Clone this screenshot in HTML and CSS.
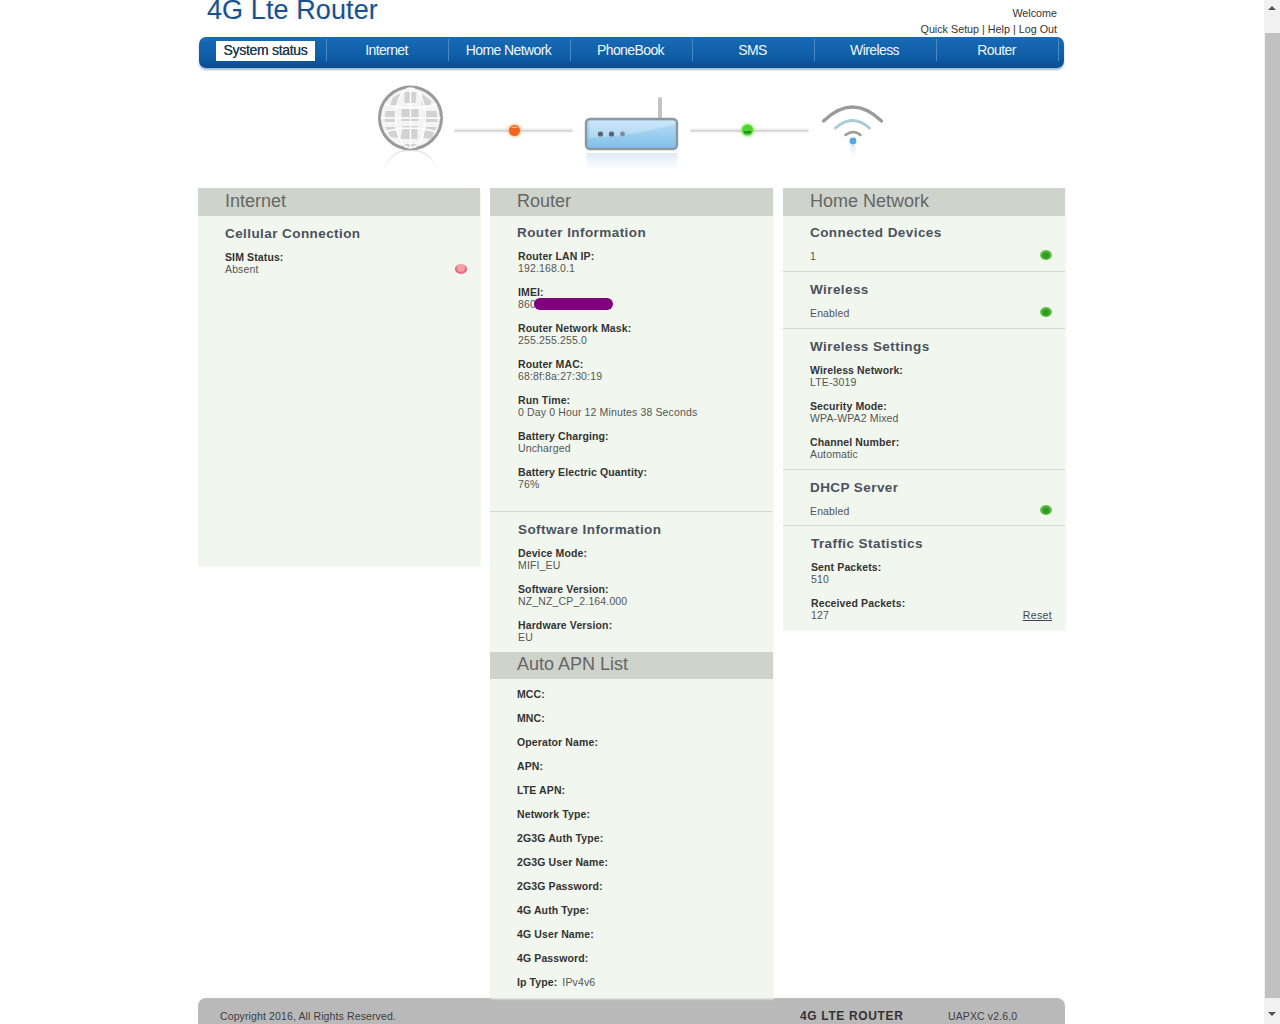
FILE: index.html
```html
<!DOCTYPE html>
<html lang="en">
<head>
<meta charset="utf-8">
<title>4G Lte Router</title>
<link rel="stylesheet" href="styles.css">
</head>
<body>
<div class="page">
  <div class="wrap">
    <header class="top">
      <h1 class="brand">4G Lte Router</h1>
      <div class="account">
        <div>Welcome</div>
        <div><a>Quick Setup</a> | <a>Help</a> | <a>Log Out</a></div>
      </div>
    </header>
    <nav class="nav">
      <a class="nav-item"><span class="nav-active">System status</span></a>
      <a class="nav-item">Internet</a>
      <a class="nav-item">Home Network</a>
      <a class="nav-item">PhoneBook</a>
      <a class="nav-item">SMS</a>
      <a class="nav-item">Wireless</a>
      <a class="nav-item">Router</a>
    </nav>
    <div class="topology">
      <svg class="topology-svg" viewBox="361.5 68 540 120" width="540" height="120" aria-hidden="true">
        <defs>
          <linearGradient id="fade" x1="0" y1="0" x2="0" y2="1">
            <stop offset="0" stop-color="#bbb" stop-opacity=".35"/>
            <stop offset="1" stop-color="#bbb" stop-opacity="0"/>
          </linearGradient>
          <linearGradient id="box" x1="0" y1="0" x2="0" y2="1">
            <stop offset="0" stop-color="#bfe0f6"/>
            <stop offset="1" stop-color="#7dbdea"/>
          </linearGradient>
          <linearGradient id="boxfade" x1="0" y1="0" x2="0" y2="1">
            <stop offset="0" stop-color="#c9dff0" stop-opacity=".6"/>
            <stop offset="1" stop-color="#c9dff0" stop-opacity="0"/>
          </linearGradient>
          <filter id="soft" x="-20%" y="-20%" width="140%" height="140%"><feGaussianBlur stdDeviation=".6"/></filter>
          <filter id="glow" x="-60%" y="-60%" width="220%" height="220%"><feGaussianBlur stdDeviation="1.2"/></filter>
        </defs>
        <g filter="url(#soft)">
          <!-- globe -->
          <circle cx="410" cy="118" r="31" fill="#f4f4f4" stroke="#9a9a9a" stroke-width="3"/>
          <g fill="#d2d2d2">
            <path d="M392 98l8-5-3 12-8 2zM404 92h12l-1 11h-11zM422 94l9 7-1 5-9-1zM385 111h11l-1 11h-11zM401 109h17v12h-17zM424 111h12l1 11h-13zM385 127h11l2 11-8-1zM402 126h15v13h-17zM424 127h12l-5 12-8-1zM402 144h15l-1 4h-12z"/>
          </g>
          <g fill="none" stroke="#fff" stroke-width="1.4">
            <ellipse cx="410" cy="118" rx="15" ry="30"/>
            <path d="M410 88v60M380 118h60M384 104q26 8 52 0M384 132q26-8 52 0"/>
          </g>
          <path d="M384 172a26 22 0 0 1 52 0" fill="none" stroke="url(#fade)" stroke-width="2"/>
          <!-- links -->
          <rect x="454" y="128" width="118" height="5" fill="#f3f3f3"/>
          <rect x="690" y="128" width="118" height="5" fill="#f3f3f3"/>
          <rect x="454" y="130" width="118" height="1.500" fill="#d0d0d0"/>
          <rect x="690" y="130" width="118" height="1.500" fill="#d0d0d0"/>
          <!-- router -->
          <rect x="657.500" y="97" width="4" height="24" rx="2" fill="#c3c3c3"/>
          <rect x="585.500" y="119" width="91" height="30" rx="4" fill="url(#box)" stroke="#8d979e" stroke-width="2.400"/>
          <path d="M589 138q46-2 86-14v-3h-86z" fill="#fff" opacity=".25"/>
          <circle cx="600" cy="134" r="2.600" fill="#59646d"/>
          <circle cx="611" cy="134" r="2.600" fill="#59646d"/>
          <circle cx="622" cy="134" r="2.400" fill="#7e8a92"/>
          <path d="M586 153h91v1l-1 16h-89l-1-16z" fill="url(#boxfade)"/>
          <!-- wifi -->
          <path d="M823 121q29-28 58 0" fill="none" stroke="#9a9a9a" stroke-width="3.200" stroke-linecap="round"/>
          <path d="M835 128q17-15 34 0" fill="none" stroke="#a9cbd8" stroke-width="3" stroke-linecap="round"/>
          <path d="M845 135q8-6 15 0" fill="none" stroke="#a09a98" stroke-width="2.600" stroke-linecap="round"/>
          <circle cx="852.500" cy="141" r="3.400" fill="#52a8e6"/>
          <rect x="850" y="145" width="5" height="12" fill="url(#boxfade)"/>
        </g>
        <!-- status dots -->
        <circle cx="514" cy="130.500" r="7" fill="#ffb070" opacity=".6" filter="url(#glow)"/>
        <circle cx="514" cy="130.500" r="5.500" fill="#f0641e"/>
        <path d="M510 128a5 4 0 0 1 8 0z" fill="#ffb98a"/>
        <circle cx="747" cy="130" r="7" fill="#8cf36a" opacity=".7" filter="url(#glow)"/>
        <circle cx="747" cy="130" r="5.500" fill="#4fd62a"/>
        <path d="M743 131h8l-1 2.500h-6z" fill="#1e8f18"/>
      </svg>
    </div>
    <main class="columns">
      <section class="panel panel-tall">
        <h2 class="panel-title">Internet</h2>
        <div class="block">
          <h3 class="block-title">Cellular Connection</h3>
          <div class="row row-end">
            <div class="field"><b>SIM Status:</b><span>Absent</span></div>
            <i class="led led-red"></i>
          </div>
        </div>
      </section>

      <div class="stack">
        <section class="panel">
          <h2 class="panel-title">Router</h2>
          <div class="block block-first block-big block-rule">
            <h3 class="block-title">Router Information</h3>
            <div class="field"><b>Router LAN IP:</b><span>192.168.0.1</span></div>
            <div class="field"><b>IMEI:</b><span>860<i class="redact"></i></span></div>
            <div class="field"><b>Router Network Mask:</b><span>255.255.255.0</span></div>
            <div class="field"><b>Router MAC:</b><span>68:8f:8a:27:30:19</span></div>
            <div class="field"><b>Run Time:</b><span>0 Day 0 Hour 12 Minutes 38 Seconds</span></div>
            <div class="field"><b>Battery Charging:</b><span>Uncharged</span></div>
            <div class="field"><b>Battery Electric Quantity:</b><span>76%</span></div>
          </div>
          <div class="block block-nudge">
            <h3 class="block-title">Software Information</h3>
            <div class="field"><b>Device Mode:</b><span>MIFI_EU</span></div>
            <div class="field"><b>Software Version:</b><span>NZ_NZ_CP_2.164.000</span></div>
            <div class="field"><b>Hardware Version:</b><span>EU</span></div>
          </div>
        </section>
        <section class="panel">
          <h2 class="panel-title panel-title-apn">Auto APN List</h2>
          <div class="apn">
            <div class="apn-row"><b>MCC:</b></div>
            <div class="apn-row"><b>MNC:</b></div>
            <div class="apn-row"><b>Operator Name:</b></div>
            <div class="apn-row"><b>APN:</b></div>
            <div class="apn-row"><b>LTE APN:</b></div>
            <div class="apn-row"><b>Network Type:</b></div>
            <div class="apn-row"><b>2G3G Auth Type:</b></div>
            <div class="apn-row"><b>2G3G User Name:</b></div>
            <div class="apn-row"><b>2G3G Password:</b></div>
            <div class="apn-row"><b>4G Auth Type:</b></div>
            <div class="apn-row"><b>4G User Name:</b></div>
            <div class="apn-row"><b>4G Password:</b></div>
            <div class="apn-row"><b>Ip Type:</b> <span>IPv4v6</span></div>
          </div>
        </section>
      </div>

      <section class="panel panel-home">
        <h2 class="panel-title">Home Network</h2>
        <div class="block block-first block-rule">
          <h3 class="block-title">Connected Devices</h3>
          <div class="row"><span class="value">1</span><i class="led led-green"></i></div>
        </div>
        <div class="block block-rule">
          <h3 class="block-title">Wireless</h3>
          <div class="row"><span class="value">Enabled</span><i class="led led-green"></i></div>
        </div>
        <div class="block block-rule">
          <h3 class="block-title">Wireless Settings</h3>
          <div class="field"><b>Wireless Network:</b><span>LTE-3019</span></div>
          <div class="field"><b>Security Mode:</b><span>WPA-WPA2 Mixed</span></div>
          <div class="field"><b>Channel Number:</b><span>Automatic</span></div>
        </div>
        <div class="block block-rule block-tight">
          <h3 class="block-title">DHCP Server</h3>
          <div class="row"><span class="value">Enabled</span><i class="led led-green"></i></div>
        </div>
        <div class="block block-nudge">
          <h3 class="block-title">Traffic Statistics</h3>
          <div class="field"><b>Sent Packets:</b><span>510</span></div>
          <div class="row row-end">
            <div class="field"><b>Received Packets:</b><span>127</span></div>
            <a class="reset">Reset</a>
          </div>
        </div>
      </section>
    </main>
    <footer class="footer">
      <span class="copyright">Copyright 2016, All Rights Reserved.</span>
      <span class="footer-brand">4G LTE ROUTER</span>
      <span class="version">UAPXC v2.6.0</span>
    </footer>
  </div>
</div>
<aside class="scrollbar" aria-hidden="true">
  <i class="arrow arrow-up"></i>
  <i class="thumb"></i>
  <i class="arrow arrow-down"></i>
</aside>
</body>
</html>
```

FILE: styles.css
```css
* { box-sizing: border-box; }
html, body { margin: 0; padding: 0; height: 1024px; overflow: hidden; background: #fff; }
body { font-family: "Liberation Sans", Arial, sans-serif; font-size: 11px; color: #444; }

.page { width: 1264px; height: 1024px; overflow: hidden; }
.wrap { width: 867px; margin: 0 0 0 198px; }

/* header */
.top { height: 37px; display: flex; justify-content: space-between; align-items: flex-start; padding: 0 8px 0 7px; overflow: hidden; }
.brand { margin: -7px 0 0; padding: 0 2px 0 2px; font-size: 27px; line-height: 34px; font-weight: normal; letter-spacing: .1px; color: #17508f; text-shadow: 0 0 5px #dfe3e6; }
.account { padding-top: 5px; text-align: right; font-size: 10.75px; line-height: 16px; color: #333; }

/* navigation */
.nav { margin: 0 1px; height: 31px; padding: 2px 5px 0 6px; display: flex; border-radius: 7px; background: linear-gradient(#176bb4, #0f5ea8 60%, #0a4d94); box-shadow: 0 2px 2px #a3b8cc; }
.nav-item { width: 122px; height: 22px; padding-right: 2px; display: flex; align-items: center; justify-content: center; border-right: 1px solid #4b89c2; color: #f0f6fb; font-size: 14px; letter-spacing: -.6px; }
.nav-active { flex: none; width: 99px; height: 20px; margin: 2px 9px 0 11px; background: #fff; color: #1f3a55; text-align: center; line-height: 18px; letter-spacing: -.3px; text-shadow: 0 0 .6px #1f3a55; }

/* topology */
.topology { height: 120px; display: flex; justify-content: center; }
.topology-svg { display: block; flex: none; }

/* columns */
.columns { height: 810px; display: grid; grid-template-columns: 282px 283px 282px; column-gap: 10px; align-items: start; }
.panel { background: #f1f7ef; box-shadow: 1px 1px 2px #f4f6f3; }
.panel-tall { height: 378px; }
.panel-home { height: 442px; }
.stack { height: 810px; display: flex; flex-direction: column; }
.stack .panel:last-child { flex: 1; }

.panel-title { margin: 0; height: 28px; padding-left: 27px; background: #ced3cb; color: #666; font-size: 18px; line-height: 26px; font-weight: normal; }
.panel-title-apn { height: 27px; line-height: 24px; }

.block { padding: 8px 13px 9px 27px; }
.block-first { padding-top: 7px; }
.block-big { padding-bottom: 21px; }
.block-big .field { margin-left: 1px; }
.block-rule { border-bottom: 1px solid #d5d8d3; }
.block-tight { padding-bottom: 8px; }
.block-nudge { padding-left: 28px; }

.block-title { margin: 0 0 7px; height: 20px; font-size: 13.5px; line-height: 20px; font-weight: bold; letter-spacing: .42px; color: #4c515c; }

.field { margin-bottom: 12px; font-size: 10.5px; line-height: 12px; }
.field:last-child { margin-bottom: 0; }
.row-end .field { margin-bottom: 0; }
.field b, .apn-row b { display: block; color: #333; font-weight: bold; letter-spacing: .12px; }
.field span, .value { display: block; color: #555; letter-spacing: .14px; }
.field span { white-space: nowrap; }

.row { display: flex; justify-content: space-between; align-items: center; height: 12px; font-size: 10.5px; line-height: 12px; }
.row-end { height: auto; align-items: flex-end; }

.led { flex: none; width: 12px; height: 10px; border-radius: 50%; display: block; }
.led-red { margin-bottom: 1px; background: radial-gradient(ellipse at 50% 35%, #f4a0a8 0 35%, #e2566a 70%); }
.led-green { margin-top: -2px; background: radial-gradient(ellipse at 50% 55%, #2f9b26 0 30%, #6fd24e 70%); }

.redact { display: inline-block; width: 79px; height: 12px; margin-left: -2px; vertical-align: top; border-radius: 6px; background: #800080; }

.reset { color: #445; text-decoration: underline; font-size: 10.5px; line-height: 12px; letter-spacing: .35px; }

.apn { padding: 9px 0 0 27px; }
.apn-row { height: 12px; margin-bottom: 12px; font-size: 10.5px; line-height: 12px; white-space: nowrap; }
.apn-row:last-child { margin-bottom: 0; }
.apn-row b { display: inline; }
.apn-row span { color: #555; margin-left: 2px; letter-spacing: .14px; }

/* footer */
.footer { height: 26px; display: flex; padding: 12px 0 0 22px; border-radius: 8px 8px 0 0; background: #b9b9b9; color: #3d3d3d; font-size: 10.5px; line-height: 13px; letter-spacing: .12px; }
.copyright { width: 580px; }
.footer-brand { width: 148px; font-weight: bold; font-size: 12px; letter-spacing: .65px; color: #333; }

/* browser scrollbar */
.scrollbar { position: fixed; top: 0; right: 0; width: 16px; height: 1024px; padding: 0 1px; display: flex; flex-direction: column; align-items: center; background: #f1f1f1; }
.thumb { display: block; width: 15px; height: 965px; background: #c1c1c1; flex: none; }
.arrow { display: block; flex: none; width: 0; height: 0; border-left: 4px solid transparent; border-right: 4px solid transparent; }
.arrow-up { margin: 6px 0 23px; border-bottom: 4px solid #505050; }
.arrow-down { margin-top: 14px; border-top: 4px solid #505050; }
```
